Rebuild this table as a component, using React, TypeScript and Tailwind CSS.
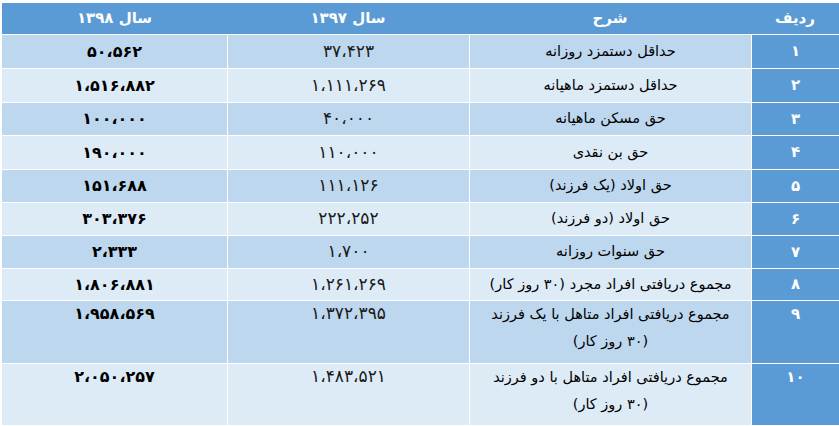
import React from "react";

const rows: { n: string; d: string; a: string; b: string; h: string }[] = [
  { n: "۱", d: "حداقل دستمزد روزانه", a: "۳۷،۴۲۳", b: "۵۰،۵۶۲", h: "h-[33px]" },
  { n: "۲", d: "حداقل دستمزد ماهیانه", a: "۱،۱۱۱،۲۶۹", b: "۱،۵۱۶،۸۸۲", h: "h-[33px]" },
  { n: "۳", d: "حق مسکن ماهیانه", a: "۴۰،۰۰۰", b: "۱۰۰،۰۰۰", h: "h-[32px]" },
  { n: "۴", d: "حق بن نقدی", a: "۱۱۰،۰۰۰", b: "۱۹۰،۰۰۰", h: "h-[33px]" },
  { n: "۵", d: "حق اولاد (یک فرزند)", a: "۱۱۱،۱۲۶", b: "۱۵۱،۶۸۸", h: "h-[32px]" },
  { n: "۶", d: "حق اولاد (دو فرزند)", a: "۲۲۲،۲۵۲", b: "۳۰۳،۳۷۶", h: "h-[32px]" },
  { n: "۷", d: "حق سنوات روزانه", a: "۱،۷۰۰", b: "۲،۳۳۳", h: "h-[32px]" },
  { n: "۸", d: "مجموع دریافتی افراد مجرد (۳۰ روز کار)", a: "۱،۲۶۱،۲۶۹", b: "۱،۸۰۶،۸۸۱", h: "h-[31px]" },
];

const tall = [
  { n: "۹", l1: "مجموع دریافتی افراد متاهل با یک فرزند", a: "۱،۳۷۲،۳۹۵", b: "۱،۹۵۸،۵۶۹", h: "h-[62px]" },
  { n: "۱۰", l1: "مجموع دریافتی افراد متاهل با دو فرزند", a: "۱،۴۸۳،۵۲۱", b: "۲،۰۵۰،۲۵۷", h: "h-[61px]" },
];

export default function App() {
  return (
    <div
      className="w-[839px] h-[426px] bg-white pt-[3px] pl-[2px] overflow-hidden"
      style={{ fontFamily: '"DejaVu Sans", sans-serif' }}
    >
      <div dir="rtl" className="flex flex-col gap-px w-[837px]">
        <div className="flex h-[31px] bg-[#5B9BD5] text-white font-bold text-[15px] items-center">
          <div className="w-[88px] text-center">ردیف</div>
          <div className="w-[282px] text-center">شرح</div>
          <div className="w-[242px] text-center">سال ۱۳۹۷</div>
          <div className="w-[225px] text-center">سال ۱۳۹۸</div>
        </div>
        {rows.map((r, i) => {
          const bg = i % 2 === 0 ? "bg-[#BDD7EE]" : "bg-[#DDEBF7]";
          return (
            <div key={i} className={`flex gap-px ${r.h}`}>
              <div className="w-[87px] bg-[#5B9BD5] text-white font-bold text-[15px] flex items-center justify-center">
                {r.n}
              </div>
              <div className={`w-[281px] ${bg} text-black text-[14.5px] flex items-center justify-center`}>
                {r.d}
              </div>
              <div className={`w-[241px] ${bg} text-[#1a1a1a] text-[17px] flex items-center justify-center`}>
                {r.a}
              </div>
              <div className={`w-[225px] ${bg} text-black font-bold text-[16px] flex items-center justify-center`}>
                {r.b}
              </div>
            </div>
          );
        })}
        {tall.map((r, i) => {
          const bg = i % 2 === 0 ? "bg-[#BDD7EE]" : "bg-[#DDEBF7]";
          return (
            <div key={i} className={`flex gap-px ${r.h}`}>
              <div className="w-[87px] bg-[#5B9BD5] text-white font-bold text-[15px] text-center leading-[27px]">
                {r.n}
              </div>
              <div className={`w-[281px] ${bg} text-black text-[14.5px] text-center leading-[27px]`}>
                {r.l1}
                <br />
                (۳۰ روز کار)
              </div>
              <div className={`w-[241px] ${bg} text-[#1a1a1a] text-[17px] text-center leading-[25px]`}>
                {r.a}
              </div>
              <div className={`w-[225px] ${bg} text-black font-bold text-[16px] text-center leading-[25px]`}>
                {r.b}
              </div>
            </div>
          );
        })}
      </div>
    </div>
  );
}
